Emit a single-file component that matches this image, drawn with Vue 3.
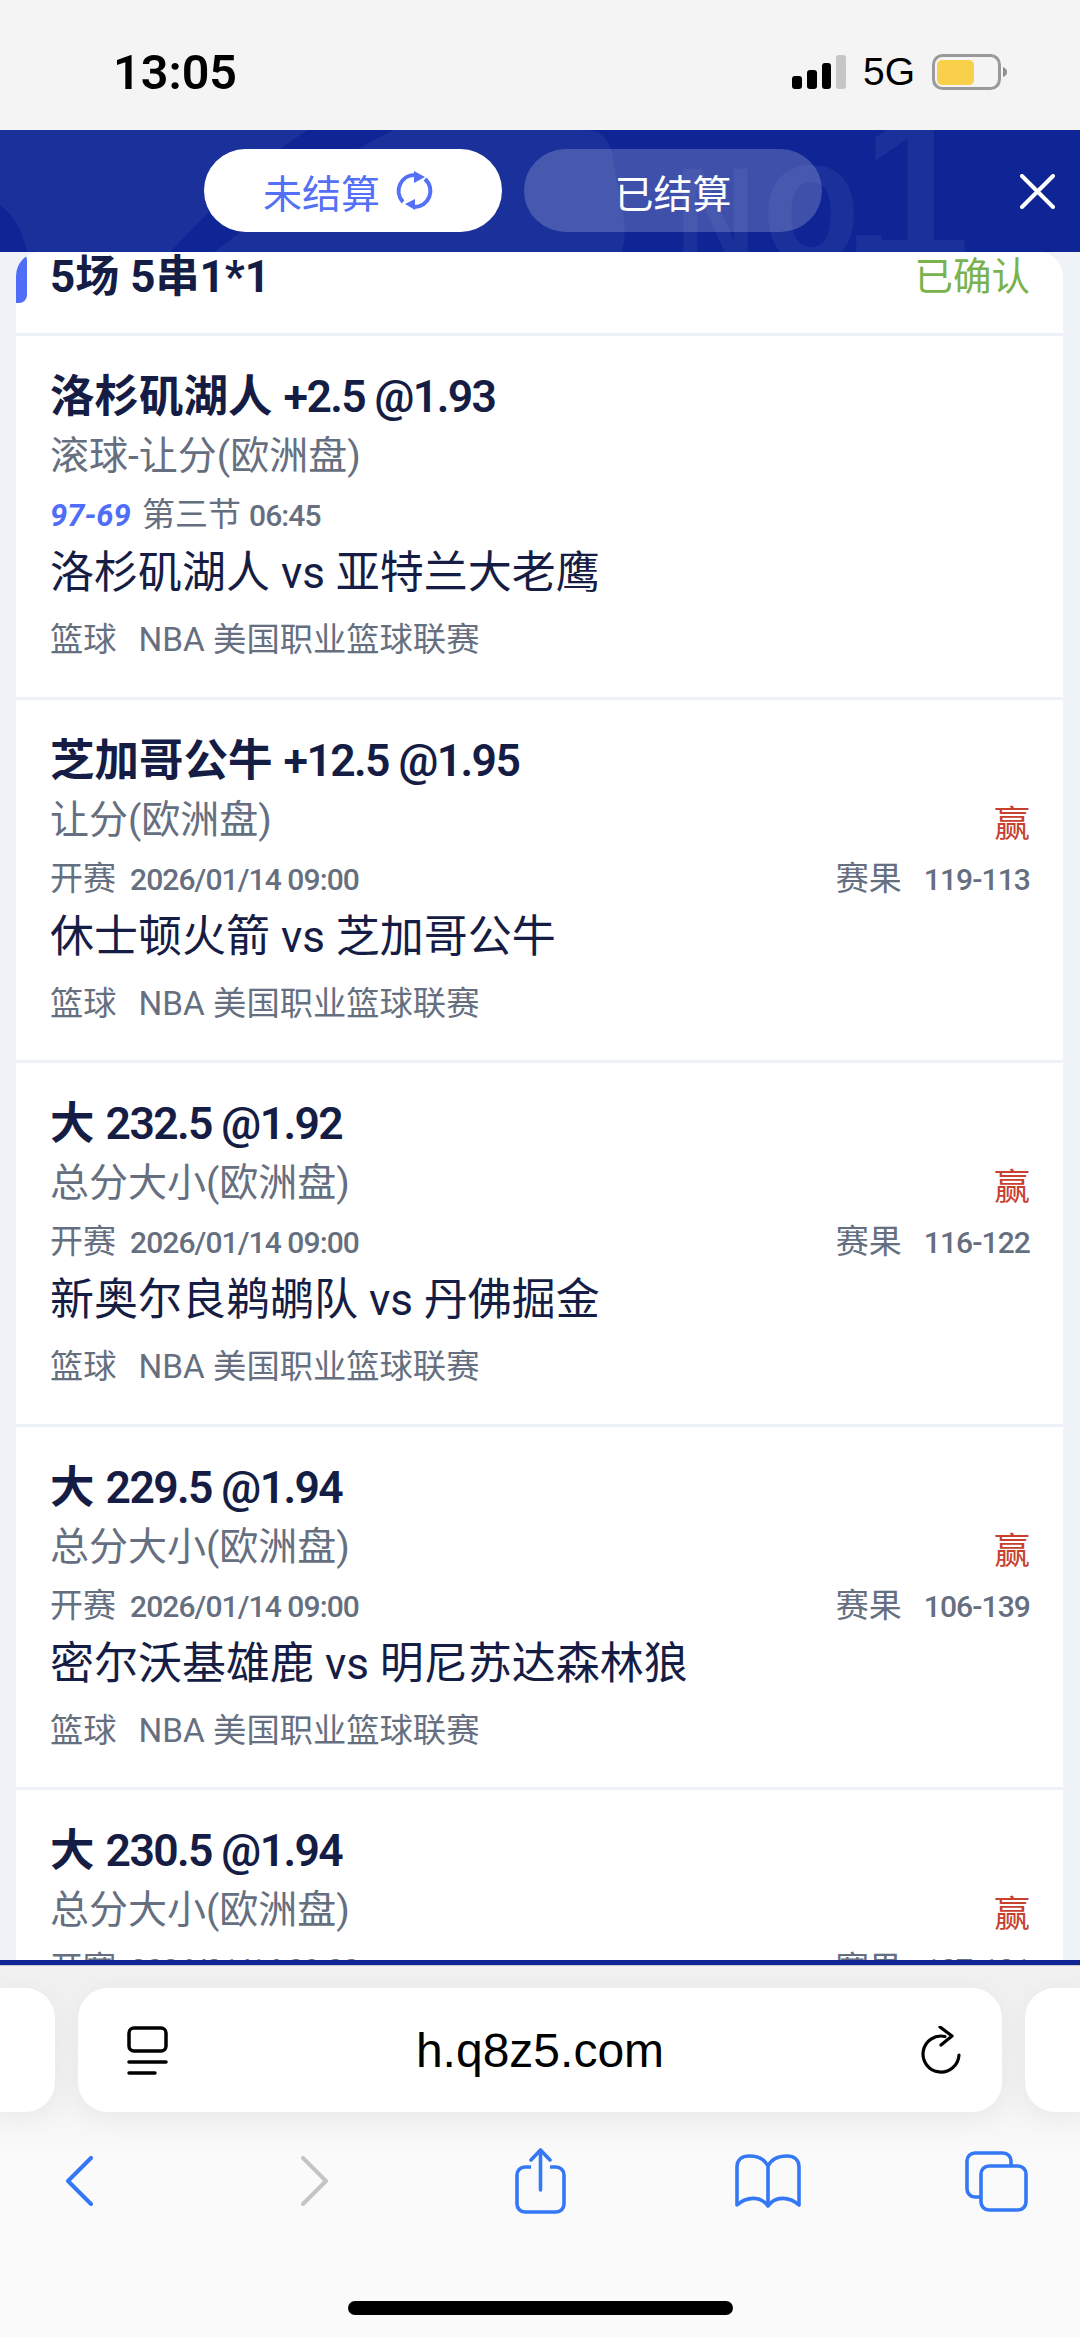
<template>
  <div class="phone">
    <div class="status-bar">
      <span class="time">13:05</span>
      <div class="status-right">
        <svg class="signal" width="54" height="34" viewBox="0 0 54 34">
          <rect x="0" y="21" width="10" height="13" rx="3" fill="#000" />
          <rect x="15" y="15" width="10" height="19" rx="3" fill="#000" />
          <rect x="30" y="8" width="9" height="26" rx="3" fill="#000" />
          <rect x="44" y="0" width="10" height="34" rx="3" fill="#c6c6c6" />
        </svg>
        <span class="net">5G</span>
        <svg width="75" height="36" viewBox="0 0 75 36">
          <rect x="1.5" y="1.5" width="66" height="33" rx="9" fill="none" stroke="#9a9a9a" stroke-width="3" />
          <rect x="5" y="6" width="37" height="25" rx="5" fill="#f9d04a" />
          <path d="M71 13c3 1 4 3 4 5s-1 4-4 5z" fill="#8f8f8f" />
        </svg>
      </div>
    </div>

    <div class="main">
      <div class="header">
        <svg class="watermark" width="1080" height="122" viewBox="0 0 1080 122" aria-hidden="true">
          <path d="M0 0H585C605 0 612 15 614 35C618 70 630 90 622 122H0Z" fill="#1a309b" />
          <path d="M308 0H393C330 30 270 80 214 122H170C215 75 260 30 308 0Z" fill="#0f2596" />
          <path d="M0 75C15 85 24 105 27 122H0Z" fill="#0f2596" />
          <text class="mark" x="676" y="132" font-size="136" textLength="79" lengthAdjust="spacingAndGlyphs">N</text>
          <text class="mark" x="762" y="132" font-size="180" textLength="98" lengthAdjust="spacingAndGlyphs">o</text>
          <text class="mark" x="844" y="132" font-size="180">.</text>
          <text class="mark" x="862" y="132" font-size="215" textLength="108" lengthAdjust="spacingAndGlyphs">1</text>
        </svg>
        <div class="tabs">
          <div class="tab active">
            未结算
            <svg class="refresh" width="37" height="38" viewBox="0 0 37 38">
              <path d="M19 3A16 16 0 0 0 7 30M29 7A16 16 0 0 1 18 35" fill="none" stroke="#5470f6" stroke-width="4" />
              <path d="M18 -1L29 5L18 11ZM19 27V38L9 32Z" fill="#5470f6" />
            </svg>
          </div>
          <div class="tab">已结算</div>
        </div>
        <svg class="close" width="35" height="35" viewBox="0 0 35 35">
          <path d="M2 2L33 33M33 2L2 33" stroke="#fff" stroke-width="4" stroke-linecap="round" />
        </svg>
      </div>

      <div class="card">
        <div class="card-head">
          <i class="accent"></i>
          <span class="head-title">5场 5串1*1</span>
          <span class="head-state">已确认</span>
        </div>
        <div v-for="(bet, index) in bets" :key="index" class="bet">
          <div class="title">{{ bet.pick }} <span class="num">{{ bet.odds }}</span></div>
          <div class="line sub">
            <span>{{ bet.market }}</span>
            <span v-if="bet.result" class="won">赢</span>
          </div>
          <div v-if="bet.live" class="line meta">
            <span><b class="score">{{ bet.live.score }}</b>第三节 <span class="num">{{ bet.live.clock }}</span></span>
          </div>
          <div v-else class="line meta">
            <span>开赛<span class="num start">{{ bet.start }}</span></span>
            <span>赛果<span class="num res">{{ bet.result }}</span></span>
          </div>
          <div class="team">{{ bet.home }} <span class="num vs">vs</span> {{ bet.away }}</div>
          <div class="league">篮球<span class="nba">NBA</span> 美国职业篮球联赛</div>
        </div>
      </div>
    </div>

    <div class="bluebar"></div>

    <div class="browser">
      <div class="address-row">
        <div class="stub stub-left"></div>
        <div class="address">
          <svg class="reader" width="41" height="49" viewBox="0 0 41 49">
            <rect x="2" y="2" width="37" height="23" rx="5" fill="none" stroke="#000" stroke-width="3.500" />
            <path d="M2 36H39M2 47H28" stroke="#000" stroke-width="3.500" stroke-linecap="round" />
          </svg>
          <span class="url">h.q8z5.com</span>
          <svg class="reload" width="40" height="49" viewBox="0 0 40 49">
            <path d="M24 10.500A18 18 0 1 0 38 29" fill="none" stroke="#000" stroke-width="3.200" stroke-linecap="round" />
            <path d="M19 1L31 10L20 19" fill="none" stroke="#000" stroke-width="3.200" stroke-linecap="round" stroke-linejoin="round" />
          </svg>
        </div>
        <div class="stub stub-right"></div>
      </div>

      <div class="toolbar">
        <svg class="tool-back" width="28" height="50" viewBox="0 0 28 50">
          <path d="M26 2L3 25L26 48" fill="none" stroke="#3478f6" stroke-width="4" stroke-linecap="round" stroke-linejoin="round" />
        </svg>
        <svg class="tool-forward" width="28" height="50" viewBox="0 0 28 50">
          <path d="M2 2L25 25L2 48" fill="none" stroke="#c4c4c4" stroke-width="4" stroke-linecap="round" stroke-linejoin="round" />
        </svg>
        <svg class="tool-share" width="51" height="66" viewBox="0 0 51 66">
          <path d="M16 19H10A8 8 0 0 0 2 27V56A8 8 0 0 0 10 64H41A8 8 0 0 0 49 56V27A8 8 0 0 0 41 19H35" fill="none" stroke="#3478f6" stroke-width="3.600" />
          <path d="M25.500 42V3M16 12L25.500 2L35 12" fill="none" stroke="#3478f6" stroke-width="3.600" stroke-linecap="round" stroke-linejoin="round" />
        </svg>
        <svg class="tool-book" width="66" height="54" viewBox="0 0 66 54">
          <path d="M33 12C29 4 22 2 14 2C7 2 2 6 2 13V51C12 42 26 42 33 52C40 42 54 42 64 51V13C64 6 59 2 52 2C44 2 37 4 33 12V52" fill="none" stroke="#3478f6" stroke-width="3.600" stroke-linejoin="round" />
        </svg>
        <svg class="tool-tabs" width="63" height="61" viewBox="0 0 63 61">
          <path d="M46 14V10A8 8 0 0 0 38 2H10A8 8 0 0 0 2 10V38A8 8 0 0 0 10 46H15" fill="none" stroke="#3478f6" stroke-width="3.600" />
          <rect x="16" y="15" width="45" height="44" rx="8" fill="none" stroke="#3478f6" stroke-width="3.600" />
        </svg>
      </div>
      <div class="home-bar"></div>
    </div>
  </div>
</template>

<script setup>
const bets = [
  {
    pick: '洛杉矶湖人',
    odds: '+2.5 @1.93',
    market: '滚球-让分(欧洲盘)',
    live: { score: '97-69', clock: '06:45' },
    home: '洛杉矶湖人',
    away: '亚特兰大老鹰'
  },
  {
    pick: '芝加哥公牛',
    odds: '+12.5 @1.95',
    market: '让分(欧洲盘)',
    start: '2026/01/14 09:00',
    result: '119-113',
    home: '休士顿火箭',
    away: '芝加哥公牛'
  },
  {
    pick: '大',
    odds: '232.5 @1.92',
    market: '总分大小(欧洲盘)',
    start: '2026/01/14 09:00',
    result: '116-122',
    home: '新奥尔良鹈鹕队',
    away: '丹佛掘金'
  },
  {
    pick: '大',
    odds: '229.5 @1.94',
    market: '总分大小(欧洲盘)',
    start: '2026/01/14 09:00',
    result: '106-139',
    home: '密尔沃基雄鹿',
    away: '明尼苏达森林狼'
  },
  {
    pick: '大',
    odds: '230.5 @1.94',
    market: '总分大小(欧洲盘)',
    start: '2026/01/14 09:00',
    result: '107-101',
    home: '',
    away: ''
  }
]
</script>

<style>
body {
  background: #f4f4f4;
}
</style>

<style scoped>
.phone {
  width: 1080px;
  height: 2337px;
  display: flex;
  flex-direction: column;
  overflow: hidden;
  font-family: Roboto, "Noto Sans CJK SC", sans-serif;
  background: #eff3f8;
}

.status-bar {
  height: 130px;
  flex: none;
  display: flex;
  align-items: center;
  justify-content: space-between;
  padding: 14px 73px 0 113px;
  box-sizing: border-box;
  background: #f4f4f4;
  font-family: "Liberation Sans", sans-serif;
  color: #000;
}

.time {
  font-family: Roboto, sans-serif;
  font-size: 48.500px;
  font-weight: 600;
}

.status-right {
  display: flex;
  align-items: center;
}

.net {
  font-size: 39px;
  margin: 0 17px 0 17px;
}

.main {
  flex: 1;
  min-height: 0;
  overflow: hidden;
}

.header {
  position: relative;
  height: 122px;
  background: #0f2596;
  overflow: hidden;
}

.watermark {
  position: absolute;
  left: 0;
  top: 0;
}

.mark {
  font-family: "Liberation Sans", sans-serif;
  font-weight: 700;
  fill: #1a309b;
}

.tabs {
  position: relative;
  display: flex;
  gap: 22px;
  padding: 19px 0 0 204px;
}

.tab {
  width: 298px;
  height: 83px;
  border-radius: 42px;
  background: rgba(255, 255, 255, 0.2);
  color: #fff;
  font-size: 39px;
  display: flex;
  align-items: center;
  justify-content: center;
}

.tab.active {
  background: #fff;
  color: #5470f6;
}

.refresh {
  margin: 0 10px 0 16px;
  overflow: visible;
}

.close {
  position: absolute;
  left: 1020px;
  top: 44px;
}

.card {
  margin: 0 17px 0 16px;
  background: #eef1f8;
  border-radius: 24px 24px 0 0;
  overflow: hidden;
}

.card-head {
  position: relative;
  height: 81px;
  padding: 0 33px 0 34px;
  display: flex;
  align-items: flex-start;
  justify-content: space-between;
  background: #fff;
  line-height: 50px;
}

.accent {
  position: absolute;
  left: 0;
  top: 0;
  width: 11px;
  height: 51px;
  background: #4f6ef7;
  border-radius: 0 8px 8px 0;
}

.head-title {
  font-size: 44px;
  font-weight: 700;
  color: #161d45;
}

.head-state {
  font-size: 38.500px;
  color: #7ab24e;
}

.bet {
  height: 360.6px;
  margin-top: 3px;
  padding: 33px 33px 0 34px;
  box-sizing: border-box;
  background: #fff;
}

.title {
  font-size: 44.500px;
  line-height: 57px;
  font-weight: 600;
  color: #161d45;
  white-space: nowrap;
}

.title .num {
  letter-spacing: -1.600px;
}

.line {
  display: flex;
  justify-content: space-between;
  color: #666f80;
  white-space: nowrap;
}

.sub {
  font-size: 39px;
  line-height: 60px;
  height: 60px;
}

.won {
  font-size: 36px;
  color: #c8402f;
  padding-top: 5px;
}

.meta {
  font-size: 33px;
  line-height: 58px;
  height: 58px;
}

.meta .num {
  font-size: 30px;
  font-weight: 500;
  letter-spacing: -0.900px;
}

.meta .start {
  margin-left: 14px;
}

.meta .res {
  margin-left: 22px;
}

.score {
  font-size: 31px;
  font-weight: 700;
  font-style: italic;
  color: #4f6ef7;
  margin-right: 11px;
}

.team {
  font-size: 44px;
  line-height: 59px;
  font-weight: 400;
  color: #161d45;
  white-space: nowrap;
}

.league {
  margin-top: 9px;
  font-size: 33.300px;
  line-height: 56px;
  color: #666f80;
  white-space: nowrap;
}

.nba {
  margin-left: 22px;
}

.bluebar {
  height: 6px;
  flex: none;
  background: #0f2596;
  border-bottom: 1px solid #c9c9c9;
  box-sizing: border-box;
}

.browser {
  height: 371px;
  flex: none;
  background: linear-gradient(#f1f1f1, #f4f4f4 140px, #fafafa 190px);
}

.address-row {
  display: flex;
  gap: 23px;
  padding-top: 22px;
}

.stub {
  width: 55px;
  height: 124px;
  flex: none;
  background: #fff;
  box-shadow: 0 4px 30px rgba(0, 0, 0, 0.06);
}

.stub-left {
  border-radius: 0 30px 30px 0;
}

.stub-right {
  border-radius: 30px 0 0 30px;
}

.address {
  width: 924px;
  height: 124px;
  flex: none;
  padding: 0 45px;
  box-sizing: border-box;
  display: grid;
  grid-template-columns: 1fr auto 1fr;
  align-items: center;
  background: #fff;
  border-radius: 30px;
  box-shadow: 0 4px 30px rgba(0, 0, 0, 0.06);
}

.reader {
  margin-left: 4px;
}

.reload {
  justify-self: end;
  margin-right: -4px;
}

.url {
  font-family: "Liberation Sans", sans-serif;
  font-size: 48px;
  color: #000;
}

.toolbar {
  display: flex;
  align-items: center;
  height: 66px;
  margin-top: 36px;
}

.tool-back {
  margin-left: 65px;
}

.tool-forward {
  margin-left: 208px;
}

.tool-share {
  margin-left: 186px;
}

.tool-book {
  margin-left: 169px;
}

.tool-tabs {
  margin-left: 164px;
}

.home-bar {
  width: 385px;
  height: 14px;
  margin: 87px auto 0;
  border-radius: 7px;
  background: #000;
}
</style>
